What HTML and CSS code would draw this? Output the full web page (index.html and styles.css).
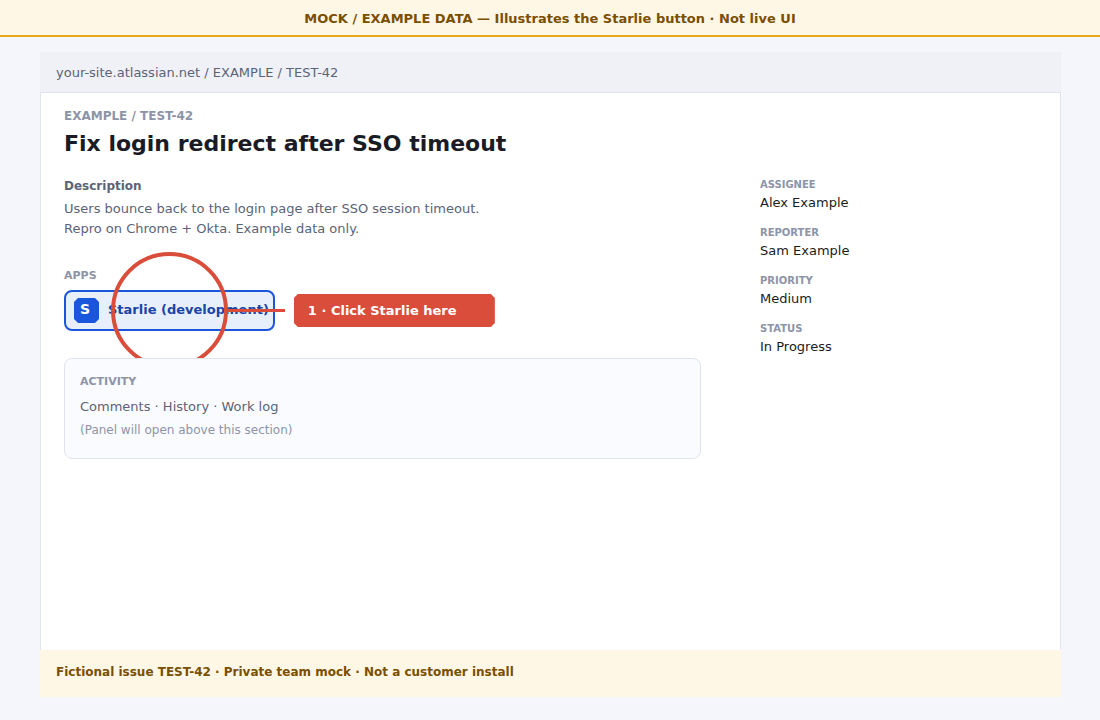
FILE: index.html
```html
<!DOCTYPE html>
<html lang="en">
<head>
<meta charset="utf-8">
<meta name="viewport" content="width=device-width, initial-scale=1">
<title>Fix login redirect after SSO timeout</title>
<link rel="stylesheet" href="styles.css">
</head>
<body>
<div class="banner">MOCK / EXAMPLE DATA — Illustrates the Starlie button · Not live UI</div>
<div class="window">
  <header class="address">your-site.atlassian.net / EXAMPLE / TEST-42</header>
  <main class="issue">
    <div class="key">EXAMPLE / TEST-42</div>
    <h1 class="title">Fix login redirect after SSO timeout</h1>
    <div class="columns">
      <div class="content">
        <h2 class="subhead">Description</h2>
        <p class="description">Users bounce back to the login page after SSO session timeout.<br>Repro on Chrome + Okta. Example data only.</p>
        <h2 class="section-label">APPS</h2>
        <div class="apps">
          <div class="app-anchor">
            <button class="app" type="button"><span class="app-icon">S</span><span class="app-name">Starlie (development)</span></button>
            <span class="ring"></span>
            <span class="pointer"></span>
          </div>
          <div class="callout">1 · Click Starlie here</div>
        </div>
        <section class="activity">
          <h2 class="section-label">ACTIVITY</h2>
          <p class="activity-tabs">Comments · History · Work log</p>
          <p class="activity-note">(Panel will open above this section)</p>
        </section>
      </div>
      <dl class="details">
        <div><dt>ASSIGNEE</dt><dd>Alex Example</dd></div>
        <div><dt>REPORTER</dt><dd>Sam Example</dd></div>
        <div><dt>PRIORITY</dt><dd>Medium</dd></div>
        <div><dt>STATUS</dt><dd>In Progress</dd></div>
      </dl>
    </div>
  </main>
  <footer class="footnote">Fictional issue TEST-42 · Private team mock · Not a customer install</footer>
</div>
</body>
</html>
```

FILE: styles.css
```css
* {
  box-sizing: border-box;
}

body {
  margin: 0;
  min-height: 100vh;
  display: flex;
  flex-direction: column;
  background: #f5f6fb;
  color: #1a1b25;
  font: 13px/20px "DejaVu Sans", sans-serif;
}

h1, h2, p, dl, dd {
  margin: 0;
}

.banner {
  padding: 9px 16px 6px;
  border-bottom: 2px solid #e6a817;
  background: #fff7e6;
  color: #7a4f00;
  font-weight: bold;
  text-align: center;
}

.window {
  flex: 1;
  display: flex;
  flex-direction: column;
  margin: 15px 39px 23px 40px;
}

.address {
  padding: 11px 16px 9px;
  background: #f0f1f6;
  color: #5c6378;
}

.issue {
  flex: 1;
  padding: 15px 23px;
  border: 1px solid #e0e4ee;
  border-bottom: 0;
  background: #fff;
}

.key {
  color: #8c94a8;
  font-size: 12px;
  font-weight: bold;
  line-height: 16px;
}

.title {
  margin: 6px 0 19px;
  font-size: 22px;
  line-height: 28px;
}

.columns {
  display: flex;
  gap: 59px;
}

.content {
  flex: 1;
  padding-top: 1px;
}

.subhead {
  margin-bottom: 5px;
  color: #5c6378;
  font-size: 12px;
  line-height: 16px;
}

.description {
  margin-bottom: 29px;
  color: #5c6378;
}

.section-label {
  color: #8c94a8;
  font-size: 11px;
  line-height: 16px;
}

.apps {
  display: flex;
  align-items: center;
  gap: 19px;
  margin: 6px 0 27px;
}

.app-anchor {
  position: relative;
}

.app {
  display: flex;
  align-items: center;
  gap: 9px;
  height: 41px;
  padding: 0 4px 0 8px;
  border: 2px solid #1a56db;
  border-radius: 8px;
  background: #e8effc;
  color: #1a44a8;
  font: bold 13px/20px "DejaVu Sans", sans-serif;
  white-space: nowrap;
}

.app-icon {
  width: 25px;
  height: 25px;
  padding-right: 3px;
  background: #1a56db;
  color: #fff;
  font-size: 14px;
  line-height: 23px;
  text-align: center;
  clip-path: polygon(4px 0, 21px 0, 25px 4px, 25px 21px, 21px 25px, 4px 25px, 0 21px, 0 4px);
}

.app-name {
  padding-bottom: 2px;
}

.ring {
  position: absolute;
  top: -38px;
  left: calc(50% - 58px);
  width: 117px;
  height: 117px;
  border: 4px solid #d94d3a;
  border-radius: 50%;
  pointer-events: none;
}

.pointer {
  position: absolute;
  top: 19px;
  right: -10px;
  left: calc(50% + 56px);
  height: 3px;
  background: #d94d3a;
  pointer-events: none;
}

.callout {
  width: 201px;
  padding: 7px 14px 6px;
  background: #d94d3a;
  color: #fff;
  font-weight: bold;
  clip-path: polygon(4px 0, calc(100% - 4px) 0, 100% 4px, 100% calc(100% - 4px), calc(100% - 4px) 100%, 4px 100%, 0 calc(100% - 4px), 0 4px);
}

.activity {
  position: relative;
  padding: 15px 15px 20px;
  border: 1px solid #e0e4ee;
  border-radius: 8px;
  background: #fafbff;
}

.activity-tabs {
  margin-top: 7px;
  color: #5c6378;
}

.activity-note {
  margin-top: 5px;
  color: #8c94a8;
  font-size: 12px;
  line-height: 16px;
}

.details {
  display: flex;
  flex-direction: column;
  gap: 12px;
  width: 277px;
}

.details dt {
  color: #8c94a8;
  font-size: 10px;
  font-weight: bold;
  line-height: 16px;
}

.footnote {
  padding: 14px 16px 17px;
  background: #fff7e6;
  color: #7a4f00;
  font-size: 12px;
  font-weight: bold;
  line-height: 16px;
}
```
